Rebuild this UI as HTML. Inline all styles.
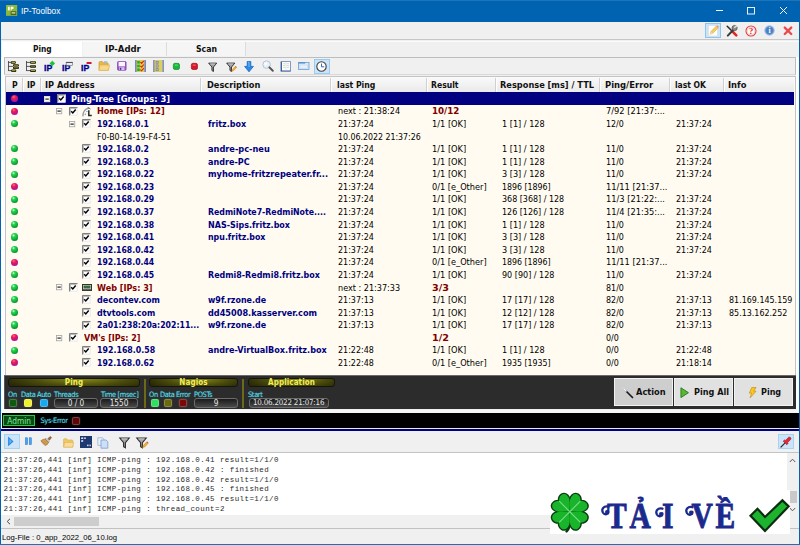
<!DOCTYPE html>
<html><head><meta charset="utf-8"><title>IP-Toolbox</title>
<style>
html,body{margin:0;padding:0}
body{width:800px;height:545px;overflow:hidden;background:#f0f0f0;position:relative;font-family:"DejaVu Sans Condensed","DejaVu Sans",sans-serif;font-size:8.6px;color:#000}
.abs,.t,.h,.hs,.dot,.sel,.ll,div,span,i,svg{position:absolute}
.title{left:0;top:0;width:800px;height:21.6px;background:#0063b1;border-top:1px solid #1c74ba;box-sizing:border-box}
.title .cap{left:21px;top:4.7px;color:#fff;font-family:"Liberation Sans",sans-serif;font-size:9.2px;line-height:11px;white-space:nowrap;transform-origin:0 0;transform:scaleX(.905)}
.wb{left:0;top:21px;width:1px;height:524px;background:#0063b1}
.tb1{left:1px;top:21.6px;width:798px;height:17.7px;background:#f0f0f0;border-bottom:1px solid #c6c6c6}
.tabbar{left:1px;top:40.5px;width:798px;height:17px;background:#f0f0f0;border-top:1px solid #fafafa;box-sizing:border-box}.white{left:1px;top:57px;width:4px;height:372px;background:#fff}
.tab{top:42.2px;height:14px;background:#f5f5f5;border-right:1px solid #dcdcdc;text-align:center;font-weight:bold;font-size:8.6px;line-height:13px;font-family:"DejaVu Sans",sans-serif;color:#000}
.tab.on{background:#fff;top:42.2px;height:15.3px;line-height:13px;border-right:none}
.page{left:4px;top:57px;width:791.5px;height:18px;background:#f0f0f0;border:1px solid #bdbdbd;border-bottom-color:#d8d8d8;box-sizing:border-box}
.tb2{display:none}
.grid{left:4.5px;top:76px;width:791px;height:299px;background:#fffbf0;border:1px solid #c4c4c4;border-bottom:none;box-sizing:border-box}
.ghead{left:5.5px;top:77px;width:788.5px;height:15.5px;background:linear-gradient(#fafafa,#f0f0f0 60%,#eaeaea);border-bottom:1px solid #d5d5d5;box-sizing:border-box}
.h{transform-origin:0 0;font-weight:bold;font-size:8.1px;white-space:nowrap;line-height:10px;color:#111}
.hs{top:77.5px;width:1px;height:14px;background:#d0d0d0;border-right:1px solid #fdfdfd}
.t{transform-origin:0 0;white-space:pre;line-height:12.5px;height:12.5px;font-size:8.1px}
svg{overflow:visible}
.b{font-weight:bold}
.n{color:#000080}
.r{color:#800000}
.w{color:#fff}
.sel{left:5.5px;width:788.5px;height:12.6px;background:#000080}
.dot{left:10.9px;width:7.2px;height:7.2px;border-radius:50%}
.dg{background:radial-gradient(circle at 36% 30%,#e8ffe8 0,#28d850 22%,#12b83a 50%,#0a7c2c 85%,#0a6a4a 100%)}
.dm{background:radial-gradient(circle at 40% 28%,#ff6a8a 0,#e81a50 30%,#c0148a 62%,#8414c4 100%)}
.dark{left:4px;top:374.7px;width:791.5px;height:34.8px;background:#2c2c2c;border-top:1.5px solid #6a6a6a;border-left:1px solid #555;box-sizing:border-box}
.black{left:1.5px;top:413px;width:797.5px;height:14.5px;background:#000}.wl{left:1px;top:409.5px;width:798px;height:3.5px;background:#f6f6f6}.wl2{left:1px;top:427.5px;width:798px;height:1.6px;background:#e8e8f0}
.split{left:1px;top:429.1px;width:798px;height:2.1px;background:#000084}
.gh{top:377.6px;height:9.6px;border-radius:3px;background:radial-gradient(ellipse 60% 160% at 55% 0%,#8a8a18,#4a4a0c 60%,#2a2a08 100%);border:1px solid #15150a;box-sizing:border-box;color:#f2ee58;font-weight:bold;text-align:center;line-height:8px;font-size:8px;letter-spacing:.1px}
.cl{top:389.6px;color:#4adcea;font-size:7.4px;line-height:9px;white-space:nowrap;letter-spacing:-0.35px;text-shadow:0 0 1px rgba(120,240,255,.5)}
.led{top:398.8px;width:8.4px;height:8.4px;border-radius:2px;box-sizing:border-box;border:1px solid rgba(255,255,255,.22);box-shadow:0 0 1.5px .5px rgba(255,255,255,.10)}
.vb{top:398px;height:10px;border-radius:3px;background:linear-gradient(#1a1a1a,#4a4a4a);border:1px solid #6c6c6c;box-sizing:border-box;color:#e8e8e8;text-align:center;font-size:8.2px;line-height:8.5px}
.vsep{top:379px;width:2px;height:29px;background:#6a6a18}
.btn{top:378px;height:27.9px;background:#e1e1e1;border:1px solid #f2f2f2;box-sizing:border-box;font-weight:bold;font-size:8.6px;line-height:27.6px;white-space:nowrap;color:#111}
.tb3{left:1px;top:431.2px;width:798px;height:22.1px;background:#f0f0f0;border-bottom:1px solid #c4c4c4;box-sizing:border-box}
.log{left:1px;top:453.3px;width:786px;height:62.1px;background:#fff}
.ll{left:3.6px;font-family:"Liberation Mono",monospace;font-size:7.5px;letter-spacing:.416px;line-height:9.76px;height:9.76px;white-space:pre;color:#2a2a2a}
.vs{left:787px;top:452.5px;width:12px;height:62.5px;background:#f0f0f0}
.hsb{left:1px;top:515.4px;width:798px;height:12.1px;background:#f0f0f0}
.status{left:1px;top:527.5px;width:798px;height:16px;background:#f0f0f0;border-top:1px solid #c2c2c2;box-sizing:border-box}.bb{left:0;top:543.6px;width:800px;height:1.4px;background:#1a72ba}
.status span{left:1.2px;top:4.6px;transform:scaleX(.975);font-family:"Liberation Sans",sans-serif;font-size:7.9px;line-height:10px;white-space:nowrap;color:#000;transform-origin:0 0}
.wm{left:550px;top:489.6px;width:240.2px;height:44.2px;background:#fff}.wmt{left:604px;top:491.8px;font-family:"Liberation Serif","DejaVu Serif",serif;font-weight:bold;font-size:36px;line-height:40px;color:#1b2a8c;white-space:pre;letter-spacing:4.3px;transform-origin:0 0;transform:scaleX(.88)}
</style></head><body>
<div class="title">
 <svg style="left:6.2px;top:4.1px" width="11.2" height="10.8" viewBox="0 0 12 12" preserveAspectRatio="none"><rect width="12" height="12" fill="#8cb83a"/><rect x="2" y="2" width="2" height="4" fill="#fff"/><path d="M5 2h3v2.5H6V6H5z" fill="#fff"/><rect x="5" y="7" width="6" height="4" fill="#4a5a20"/><rect x="6" y="8" width="4" height="1.5" fill="#d8e8a0"/></svg>
 <span class="cap">IP-Toolbox</span>
 <svg style="left:715px;top:4.2px" width="80" height="12" viewBox="0 0 80 12"><path d="M1 5.5H8" stroke="#fff" stroke-width="1"/><rect x="32.5" y="2.5" width="7" height="6.5" fill="none" stroke="#fff" stroke-width=".9"/><path d="M65 2L72 9M72 2L65 9" stroke="#fff" stroke-width="1"/></svg>
</div>
<div class="wb"></div><div class="wb" style="left:798.5px;width:1.5px"></div>
<div class="tb1"></div>
<div class="tabbar"></div>
<div class="tab on" style="left:1.5px;width:80px"></div>
<div class="tab" style="left:82.5px;width:83px"></div>
<div class="tab" style="left:166.5px;width:78.5px"></div>
<span class="h" style="left:32.6px;top:44.3px;transform:scaleX(1.026)">Ping</span>
<span class="h" style="left:104.6px;top:44.3px;transform:scaleX(1.171)">IP-Addr</span>
<span class="h" style="left:196px;top:44.3px;transform:scaleX(1.068)">Scan</span>
<div class="white"></div><div class="white" style="left:795.5px;width:3px"></div>
<div class="page"></div>
<div class="tb2"></div>
<div class="grid"></div>
<div class="ghead"></div>
<span class="h" style="left:11.6px;top:80.4px;transform:scaleX(1.062)">P</span>
<i class="hs" style="left:21.5px"></i>
<span class="h" style="left:26.8px;top:80.4px;transform:scaleX(1.062)">IP</span>
<i class="hs" style="left:39.5px"></i>
<span class="h" style="left:45px;top:80.4px;transform:scaleX(1.131)">IP Address</span>
<i class="hs" style="left:200px"></i>
<span class="h" style="left:207px;top:80.4px;transform:scaleX(1.131)">Description</span>
<i class="hs" style="left:330px"></i>
<span class="h" style="left:336.8px;top:80.4px;transform:scaleX(1.064)">last Ping</span>
<i class="hs" style="left:425.5px"></i>
<span class="h" style="left:430.8px;top:80.4px;transform:scaleX(1.056)">Result</span>
<i class="hs" style="left:494.5px"></i>
<span class="h" style="left:500px;top:80.4px;transform:scaleX(1.131)">Response [ms] / TTL</span>
<i class="hs" style="left:598.5px"></i>
<span class="h" style="left:604.7px;top:80.4px;transform:scaleX(1.159)">Ping/Error</span>
<i class="hs" style="left:668.5px"></i>
<span class="h" style="left:674.5px;top:80.4px;transform:scaleX(1.048)">last OK</span>
<i class="hs" style="left:722.5px"></i>
<span class="h" style="left:727.8px;top:80.4px;transform:scaleX(1.146)">Info</span>
<div class="sel" style="top:92.4px"></div>
<i class="dot dm" style="top:95.0px"></i>
<svg style="left:44px;top:95.6px" width="6.2" height="6.2" viewBox="0 0 7 7"><rect x="0.5" y="0.5" width="6" height="6" fill="#fbfbf0" stroke="#e8e8d8"/><path d="M1.6 3.5H5.4" stroke="#111" stroke-width="1.25"/></svg>
<svg style="left:57px;top:94.1px" width="8.6" height="8.6" viewBox="0 0 9 9"><rect x="0" y="0" width="9" height="9" fill="#fff"/><path d="M.5 9V.5H9" fill="none" stroke="#7a7a7a" stroke-width="1"/><path d="M1.5 8V1.5H8" fill="none" stroke="#4a4a4a" stroke-width=".8" opacity=".55"/><path d="M8.6 .8V8.6H.8" fill="none" stroke="#e4e4e4" stroke-width=".8"/><path d="M2.3 4.4 L4 6.3 L7 2.6" fill="none" stroke="#000" stroke-width="1.5"/></svg>
<span class="t b w" style="left:71px;top:92.8px;transform:scaleX(1.143)">Ping-Tree [Groups: 3]</span>
<i class="dot dm" style="top:107.6px"></i>
<svg style="left:56.3px;top:108.2px" width="6.2" height="6.2" viewBox="0 0 7 7"><rect x="0.5" y="0.5" width="6" height="6" fill="#fffefa" stroke="#a8a8a8"/><path d="M1.6 3.5H5.4" stroke="#111" stroke-width="1.25"/></svg>
<svg style="left:69px;top:106.7px" width="8.6" height="8.6" viewBox="0 0 9 9"><rect x="0" y="0" width="9" height="9" fill="#fff"/><path d="M.5 9V.5H9" fill="none" stroke="#7a7a7a" stroke-width="1"/><path d="M1.5 8V1.5H8" fill="none" stroke="#4a4a4a" stroke-width=".8" opacity=".55"/><path d="M8.6 .8V8.6H.8" fill="none" stroke="#e4e4e4" stroke-width=".8"/><path d="M2.3 4.4 L4 6.3 L7 2.6" fill="none" stroke="#000" stroke-width="1.5"/></svg>
<svg style="left:82px;top:106.8px" width="11" height="10" viewBox="0 0 11 10"><path d="M.8 9.4 C1 4.6 3.6 1.6 7.4 1.2" fill="none" stroke="#9a9a9a" stroke-width="1.3"/><path d="M5.6 .4 L8.6 2" stroke="#555" stroke-width=".8"/><path d="M3 8 L3.6 6.6 M4.6 5 L5.4 4" stroke="#3a8af0" stroke-width="1"/><path d="M6.8 3.2 V8.6 H9.8" stroke="#2a2a2a" stroke-width="1.5" fill="none"/></svg>
<span class="t b r" style="left:96.7px;top:105.4px;transform:scaleX(1.116)">Home [IPs: 12]</span>
<span class="t" style="left:338.3px;top:105.4px;transform:scaleX(1.111)">next : 21:38:24</span>
<span class="t b r" style="left:432.3px;top:105.4px;transform:scaleX(1.195)">10/12</span>
<span class="t" style="left:606.3px;top:105.4px;transform:scaleX(1.137)">7/92 [21:37:...</span>
<i class="dot dg" style="top:120.2px"></i>
<svg style="left:69.1px;top:120.8px" width="6.2" height="6.2" viewBox="0 0 7 7"><rect x="0.5" y="0.5" width="6" height="6" fill="#fffefa" stroke="#a8a8a8"/><path d="M1.6 3.5H5.4" stroke="#111" stroke-width="1.25"/></svg>
<svg style="left:81.8px;top:119.3px" width="8.6" height="8.6" viewBox="0 0 9 9"><rect x="0" y="0" width="9" height="9" fill="#fff"/><path d="M.5 9V.5H9" fill="none" stroke="#7a7a7a" stroke-width="1"/><path d="M1.5 8V1.5H8" fill="none" stroke="#4a4a4a" stroke-width=".8" opacity=".55"/><path d="M8.6 .8V8.6H.8" fill="none" stroke="#e4e4e4" stroke-width=".8"/><path d="M2.3 4.4 L4 6.3 L7 2.6" fill="none" stroke="#000" stroke-width="1.5"/></svg>
<span class="t b n" style="left:97.1px;top:118.0px;transform:scaleX(1.061)">192.168.0.1</span>
<span class="t b n" style="left:208.2px;top:118.0px;transform:scaleX(1.099)">fritz.box</span>
<span class="t" style="left:338.3px;top:118.0px;transform:scaleX(1.095)">21:37:24</span>
<span class="t" style="left:432.3px;top:118.0px;transform:scaleX(1.132)">1/1 [OK]</span>
<span class="t" style="left:501.5px;top:118.0px;transform:scaleX(1.117)">1 [1] / 128</span>
<span class="t" style="left:606.3px;top:118.0px;transform:scaleX(1.088)">12/0</span>
<span class="t" style="left:676.1px;top:118.0px;transform:scaleX(1.095)">21:37:24</span>
<span class="t" style="left:97.1px;top:130.5px;transform:scaleX(1.089)">F0-B0-14-19-F4-51</span>
<span class="t" style="left:338.3px;top:130.5px;transform:scaleX(1.079)">10.06.2022 21:37:26</span>
<i class="dot dg" style="top:145.3px"></i>
<svg style="left:81.8px;top:144.4px" width="8.6" height="8.6" viewBox="0 0 9 9"><rect x="0" y="0" width="9" height="9" fill="#fff"/><path d="M.5 9V.5H9" fill="none" stroke="#7a7a7a" stroke-width="1"/><path d="M1.5 8V1.5H8" fill="none" stroke="#4a4a4a" stroke-width=".8" opacity=".55"/><path d="M8.6 .8V8.6H.8" fill="none" stroke="#e4e4e4" stroke-width=".8"/><path d="M2.3 4.4 L4 6.3 L7 2.6" fill="none" stroke="#000" stroke-width="1.5"/></svg>
<span class="t b n" style="left:97.1px;top:143.1px;transform:scaleX(1.062)">192.168.0.2</span>
<span class="t b n" style="left:208.2px;top:143.1px;transform:scaleX(1.129)">andre-pc-neu</span>
<span class="t" style="left:338.3px;top:143.1px;transform:scaleX(1.095)">21:37:24</span>
<span class="t" style="left:432.3px;top:143.1px;transform:scaleX(1.132)">1/1 [OK]</span>
<span class="t" style="left:501.5px;top:143.1px;transform:scaleX(1.117)">1 [1] / 128</span>
<span class="t" style="left:606.3px;top:143.1px;transform:scaleX(1.094)">11/0</span>
<span class="t" style="left:676.1px;top:143.1px;transform:scaleX(1.095)">21:37:24</span>
<i class="dot dg" style="top:157.9px"></i>
<svg style="left:81.8px;top:157.0px" width="8.6" height="8.6" viewBox="0 0 9 9"><rect x="0" y="0" width="9" height="9" fill="#fff"/><path d="M.5 9V.5H9" fill="none" stroke="#7a7a7a" stroke-width="1"/><path d="M1.5 8V1.5H8" fill="none" stroke="#4a4a4a" stroke-width=".8" opacity=".55"/><path d="M8.6 .8V8.6H.8" fill="none" stroke="#e4e4e4" stroke-width=".8"/><path d="M2.3 4.4 L4 6.3 L7 2.6" fill="none" stroke="#000" stroke-width="1.5"/></svg>
<span class="t b n" style="left:97.1px;top:155.7px;transform:scaleX(1.062)">192.168.0.3</span>
<span class="t b n" style="left:208.2px;top:155.7px;transform:scaleX(1.108)">andre-PC</span>
<span class="t" style="left:338.3px;top:155.7px;transform:scaleX(1.095)">21:37:24</span>
<span class="t" style="left:432.3px;top:155.7px;transform:scaleX(1.132)">1/1 [OK]</span>
<span class="t" style="left:501.5px;top:155.7px;transform:scaleX(1.117)">1 [1] / 128</span>
<span class="t" style="left:606.3px;top:155.7px;transform:scaleX(1.094)">11/0</span>
<span class="t" style="left:676.1px;top:155.7px;transform:scaleX(1.095)">21:37:24</span>
<i class="dot dg" style="top:170.5px"></i>
<svg style="left:81.8px;top:169.6px" width="8.6" height="8.6" viewBox="0 0 9 9"><rect x="0" y="0" width="9" height="9" fill="#fff"/><path d="M.5 9V.5H9" fill="none" stroke="#7a7a7a" stroke-width="1"/><path d="M1.5 8V1.5H8" fill="none" stroke="#4a4a4a" stroke-width=".8" opacity=".55"/><path d="M8.6 .8V8.6H.8" fill="none" stroke="#e4e4e4" stroke-width=".8"/><path d="M2.3 4.4 L4 6.3 L7 2.6" fill="none" stroke="#000" stroke-width="1.5"/></svg>
<span class="t b n" style="left:97.1px;top:168.3px;transform:scaleX(1.062)">192.168.0.22</span>
<span class="t b n" style="left:208.2px;top:168.3px;transform:scaleX(1.131)">myhome-fritzrepeater.fr...</span>
<span class="t" style="left:338.3px;top:168.3px;transform:scaleX(1.095)">21:37:24</span>
<span class="t" style="left:432.3px;top:168.3px;transform:scaleX(1.132)">1/1 [OK]</span>
<span class="t" style="left:501.5px;top:168.3px;transform:scaleX(1.117)">3 [3] / 128</span>
<span class="t" style="left:606.3px;top:168.3px;transform:scaleX(1.094)">11/0</span>
<span class="t" style="left:676.1px;top:168.3px;transform:scaleX(1.095)">21:37:24</span>
<i class="dot dm" style="top:183.1px"></i>
<svg style="left:81.8px;top:182.2px" width="8.6" height="8.6" viewBox="0 0 9 9"><rect x="0" y="0" width="9" height="9" fill="#fff"/><path d="M.5 9V.5H9" fill="none" stroke="#7a7a7a" stroke-width="1"/><path d="M1.5 8V1.5H8" fill="none" stroke="#4a4a4a" stroke-width=".8" opacity=".55"/><path d="M8.6 .8V8.6H.8" fill="none" stroke="#e4e4e4" stroke-width=".8"/><path d="M2.3 4.4 L4 6.3 L7 2.6" fill="none" stroke="#000" stroke-width="1.5"/></svg>
<span class="t b n" style="left:97.1px;top:180.9px;transform:scaleX(1.062)">192.168.0.23</span>
<span class="t" style="left:338.3px;top:180.9px;transform:scaleX(1.095)">21:37:24</span>
<span class="t" style="left:432.3px;top:180.9px;transform:scaleX(1.127)">0/1 [e_Other]</span>
<span class="t" style="left:501.5px;top:180.9px;transform:scaleX(1.079)">1896 [1896]</span>
<span class="t" style="left:606.3px;top:180.9px;transform:scaleX(1.136)">11/11 [21:37...</span>
<i class="dot dg" style="top:195.6px"></i>
<svg style="left:81.8px;top:194.7px" width="8.6" height="8.6" viewBox="0 0 9 9"><rect x="0" y="0" width="9" height="9" fill="#fff"/><path d="M.5 9V.5H9" fill="none" stroke="#7a7a7a" stroke-width="1"/><path d="M1.5 8V1.5H8" fill="none" stroke="#4a4a4a" stroke-width=".8" opacity=".55"/><path d="M8.6 .8V8.6H.8" fill="none" stroke="#e4e4e4" stroke-width=".8"/><path d="M2.3 4.4 L4 6.3 L7 2.6" fill="none" stroke="#000" stroke-width="1.5"/></svg>
<span class="t b n" style="left:97.1px;top:193.4px;transform:scaleX(1.062)">192.168.0.29</span>
<span class="t" style="left:338.3px;top:193.4px;transform:scaleX(1.095)">21:37:24</span>
<span class="t" style="left:432.3px;top:193.4px;transform:scaleX(1.132)">1/1 [OK]</span>
<span class="t" style="left:501.5px;top:193.4px;transform:scaleX(1.094)">368 [368] / 128</span>
<span class="t" style="left:606.3px;top:193.4px;transform:scaleX(1.136)">11/3 [21:22:...</span>
<span class="t" style="left:676.1px;top:193.4px;transform:scaleX(1.095)">21:37:24</span>
<i class="dot dg" style="top:208.2px"></i>
<svg style="left:81.8px;top:207.3px" width="8.6" height="8.6" viewBox="0 0 9 9"><rect x="0" y="0" width="9" height="9" fill="#fff"/><path d="M.5 9V.5H9" fill="none" stroke="#7a7a7a" stroke-width="1"/><path d="M1.5 8V1.5H8" fill="none" stroke="#4a4a4a" stroke-width=".8" opacity=".55"/><path d="M8.6 .8V8.6H.8" fill="none" stroke="#e4e4e4" stroke-width=".8"/><path d="M2.3 4.4 L4 6.3 L7 2.6" fill="none" stroke="#000" stroke-width="1.5"/></svg>
<span class="t b n" style="left:97.1px;top:206.0px;transform:scaleX(1.062)">192.168.0.37</span>
<span class="t b n" style="left:208.2px;top:206.0px;transform:scaleX(1.073)">RedmiNote7-RedmiNote....</span>
<span class="t" style="left:338.3px;top:206.0px;transform:scaleX(1.095)">21:37:24</span>
<span class="t" style="left:432.3px;top:206.0px;transform:scaleX(1.132)">1/1 [OK]</span>
<span class="t" style="left:501.5px;top:206.0px;transform:scaleX(1.094)">126 [126] / 128</span>
<span class="t" style="left:606.3px;top:206.0px;transform:scaleX(1.136)">11/4 [21:35:...</span>
<span class="t" style="left:676.1px;top:206.0px;transform:scaleX(1.095)">21:37:24</span>
<i class="dot dg" style="top:220.8px"></i>
<svg style="left:81.8px;top:219.9px" width="8.6" height="8.6" viewBox="0 0 9 9"><rect x="0" y="0" width="9" height="9" fill="#fff"/><path d="M.5 9V.5H9" fill="none" stroke="#7a7a7a" stroke-width="1"/><path d="M1.5 8V1.5H8" fill="none" stroke="#4a4a4a" stroke-width=".8" opacity=".55"/><path d="M8.6 .8V8.6H.8" fill="none" stroke="#e4e4e4" stroke-width=".8"/><path d="M2.3 4.4 L4 6.3 L7 2.6" fill="none" stroke="#000" stroke-width="1.5"/></svg>
<span class="t b n" style="left:97.1px;top:218.6px;transform:scaleX(1.062)">192.168.0.38</span>
<span class="t b n" style="left:208.2px;top:218.6px;transform:scaleX(1.098)">NAS-Sips.fritz.box</span>
<span class="t" style="left:338.3px;top:218.6px;transform:scaleX(1.095)">21:37:24</span>
<span class="t" style="left:432.3px;top:218.6px;transform:scaleX(1.132)">1/1 [OK]</span>
<span class="t" style="left:501.5px;top:218.6px;transform:scaleX(1.117)">1 [1] / 128</span>
<span class="t" style="left:606.3px;top:218.6px;transform:scaleX(1.094)">11/0</span>
<span class="t" style="left:676.1px;top:218.6px;transform:scaleX(1.095)">21:37:24</span>
<i class="dot dg" style="top:233.4px"></i>
<svg style="left:81.8px;top:232.5px" width="8.6" height="8.6" viewBox="0 0 9 9"><rect x="0" y="0" width="9" height="9" fill="#fff"/><path d="M.5 9V.5H9" fill="none" stroke="#7a7a7a" stroke-width="1"/><path d="M1.5 8V1.5H8" fill="none" stroke="#4a4a4a" stroke-width=".8" opacity=".55"/><path d="M8.6 .8V8.6H.8" fill="none" stroke="#e4e4e4" stroke-width=".8"/><path d="M2.3 4.4 L4 6.3 L7 2.6" fill="none" stroke="#000" stroke-width="1.5"/></svg>
<span class="t b n" style="left:97.1px;top:231.2px;transform:scaleX(1.062)">192.168.0.41</span>
<span class="t b n" style="left:208.2px;top:231.2px;transform:scaleX(1.083)">npu.fritz.box</span>
<span class="t" style="left:338.3px;top:231.2px;transform:scaleX(1.095)">21:37:24</span>
<span class="t" style="left:432.3px;top:231.2px;transform:scaleX(1.132)">1/1 [OK]</span>
<span class="t" style="left:501.5px;top:231.2px;transform:scaleX(1.117)">3 [3] / 128</span>
<span class="t" style="left:606.3px;top:231.2px;transform:scaleX(1.094)">11/0</span>
<span class="t" style="left:676.1px;top:231.2px;transform:scaleX(1.095)">21:37:24</span>
<i class="dot dg" style="top:246.0px"></i>
<svg style="left:81.8px;top:245.1px" width="8.6" height="8.6" viewBox="0 0 9 9"><rect x="0" y="0" width="9" height="9" fill="#fff"/><path d="M.5 9V.5H9" fill="none" stroke="#7a7a7a" stroke-width="1"/><path d="M1.5 8V1.5H8" fill="none" stroke="#4a4a4a" stroke-width=".8" opacity=".55"/><path d="M8.6 .8V8.6H.8" fill="none" stroke="#e4e4e4" stroke-width=".8"/><path d="M2.3 4.4 L4 6.3 L7 2.6" fill="none" stroke="#000" stroke-width="1.5"/></svg>
<span class="t b n" style="left:97.1px;top:243.8px;transform:scaleX(1.062)">192.168.0.42</span>
<span class="t" style="left:338.3px;top:243.8px;transform:scaleX(1.095)">21:37:24</span>
<span class="t" style="left:432.3px;top:243.8px;transform:scaleX(1.132)">1/1 [OK]</span>
<span class="t" style="left:501.5px;top:243.8px;transform:scaleX(1.117)">3 [3] / 128</span>
<span class="t" style="left:606.3px;top:243.8px;transform:scaleX(1.094)">11/0</span>
<span class="t" style="left:676.1px;top:243.8px;transform:scaleX(1.095)">21:37:24</span>
<i class="dot dm" style="top:258.5px"></i>
<svg style="left:81.8px;top:257.6px" width="8.6" height="8.6" viewBox="0 0 9 9"><rect x="0" y="0" width="9" height="9" fill="#fff"/><path d="M.5 9V.5H9" fill="none" stroke="#7a7a7a" stroke-width="1"/><path d="M1.5 8V1.5H8" fill="none" stroke="#4a4a4a" stroke-width=".8" opacity=".55"/><path d="M8.6 .8V8.6H.8" fill="none" stroke="#e4e4e4" stroke-width=".8"/><path d="M2.3 4.4 L4 6.3 L7 2.6" fill="none" stroke="#000" stroke-width="1.5"/></svg>
<span class="t b n" style="left:97.1px;top:256.3px;transform:scaleX(1.062)">192.168.0.44</span>
<span class="t" style="left:338.3px;top:256.3px;transform:scaleX(1.095)">21:37:24</span>
<span class="t" style="left:432.3px;top:256.3px;transform:scaleX(1.127)">0/1 [e_Other]</span>
<span class="t" style="left:501.5px;top:256.3px;transform:scaleX(1.079)">1896 [1896]</span>
<span class="t" style="left:606.3px;top:256.3px;transform:scaleX(1.136)">11/11 [21:37...</span>
<i class="dot dg" style="top:271.1px"></i>
<svg style="left:81.8px;top:270.2px" width="8.6" height="8.6" viewBox="0 0 9 9"><rect x="0" y="0" width="9" height="9" fill="#fff"/><path d="M.5 9V.5H9" fill="none" stroke="#7a7a7a" stroke-width="1"/><path d="M1.5 8V1.5H8" fill="none" stroke="#4a4a4a" stroke-width=".8" opacity=".55"/><path d="M8.6 .8V8.6H.8" fill="none" stroke="#e4e4e4" stroke-width=".8"/><path d="M2.3 4.4 L4 6.3 L7 2.6" fill="none" stroke="#000" stroke-width="1.5"/></svg>
<span class="t b n" style="left:97.1px;top:268.9px;transform:scaleX(1.062)">192.168.0.45</span>
<span class="t b n" style="left:208.2px;top:268.9px;transform:scaleX(1.094)">Redmi8-Redmi8.fritz.box</span>
<span class="t" style="left:338.3px;top:268.9px;transform:scaleX(1.095)">21:37:24</span>
<span class="t" style="left:432.3px;top:268.9px;transform:scaleX(1.132)">1/1 [OK]</span>
<span class="t" style="left:501.5px;top:268.9px;transform:scaleX(1.104)">90 [90] / 128</span>
<span class="t" style="left:606.3px;top:268.9px;transform:scaleX(1.094)">11/0</span>
<span class="t" style="left:676.1px;top:268.9px;transform:scaleX(1.095)">21:37:24</span>
<i class="dot dg" style="top:283.7px"></i>
<svg style="left:56.3px;top:284.3px" width="6.2" height="6.2" viewBox="0 0 7 7"><rect x="0.5" y="0.5" width="6" height="6" fill="#fffefa" stroke="#a8a8a8"/><path d="M1.6 3.5H5.4" stroke="#111" stroke-width="1.25"/></svg>
<svg style="left:69px;top:282.8px" width="8.6" height="8.6" viewBox="0 0 9 9"><rect x="0" y="0" width="9" height="9" fill="#fff"/><path d="M.5 9V.5H9" fill="none" stroke="#7a7a7a" stroke-width="1"/><path d="M1.5 8V1.5H8" fill="none" stroke="#4a4a4a" stroke-width=".8" opacity=".55"/><path d="M8.6 .8V8.6H.8" fill="none" stroke="#e4e4e4" stroke-width=".8"/><path d="M2.3 4.4 L4 6.3 L7 2.6" fill="none" stroke="#000" stroke-width="1.5"/></svg>
<svg style="left:81.5px;top:283.8px" width="10" height="7" viewBox="0 0 10 7"><rect x="0.5" y="0.5" width="9" height="6" fill="#dfe6df" stroke="#333"/><rect x="1.5" y="1.5" width="7" height="3" fill="#3a6a3a"/><path d="M1 5.6H9" stroke="#555" stroke-width="1"/></svg>
<span class="t b r" style="left:96.7px;top:281.5px;transform:scaleX(1.115)">Web [IPs: 3]</span>
<span class="t" style="left:338.3px;top:281.5px;transform:scaleX(1.111)">next : 21:37:33</span>
<span class="t b r" style="left:432.3px;top:281.5px;transform:scaleX(1.328)">3/3</span>
<span class="t" style="left:606.3px;top:281.5px;transform:scaleX(1.094)">81/0</span>
<i class="dot dg" style="top:296.3px"></i>
<svg style="left:81.8px;top:295.4px" width="8.6" height="8.6" viewBox="0 0 9 9"><rect x="0" y="0" width="9" height="9" fill="#fff"/><path d="M.5 9V.5H9" fill="none" stroke="#7a7a7a" stroke-width="1"/><path d="M1.5 8V1.5H8" fill="none" stroke="#4a4a4a" stroke-width=".8" opacity=".55"/><path d="M8.6 .8V8.6H.8" fill="none" stroke="#e4e4e4" stroke-width=".8"/><path d="M2.3 4.4 L4 6.3 L7 2.6" fill="none" stroke="#000" stroke-width="1.5"/></svg>
<span class="t b n" style="left:97.1px;top:294.1px;transform:scaleX(1.107)">decontev.com</span>
<span class="t b n" style="left:208.2px;top:294.1px;transform:scaleX(1.093)">w9f.rzone.de</span>
<span class="t" style="left:338.3px;top:294.1px;transform:scaleX(1.094)">21:37:13</span>
<span class="t" style="left:432.3px;top:294.1px;transform:scaleX(1.132)">1/1 [OK]</span>
<span class="t" style="left:501.5px;top:294.1px;transform:scaleX(1.104)">17 [17] / 128</span>
<span class="t" style="left:606.3px;top:294.1px;transform:scaleX(1.094)">82/0</span>
<span class="t" style="left:676.1px;top:294.1px;transform:scaleX(1.094)">21:37:13</span>
<span class="t" style="left:729px;top:294.1px;transform:scaleX(1.094)">81.169.145.159</span>
<i class="dot dg" style="top:308.9px"></i>
<svg style="left:81.8px;top:308.0px" width="8.6" height="8.6" viewBox="0 0 9 9"><rect x="0" y="0" width="9" height="9" fill="#fff"/><path d="M.5 9V.5H9" fill="none" stroke="#7a7a7a" stroke-width="1"/><path d="M1.5 8V1.5H8" fill="none" stroke="#4a4a4a" stroke-width=".8" opacity=".55"/><path d="M8.6 .8V8.6H.8" fill="none" stroke="#e4e4e4" stroke-width=".8"/><path d="M2.3 4.4 L4 6.3 L7 2.6" fill="none" stroke="#000" stroke-width="1.5"/></svg>
<span class="t b n" style="left:97.1px;top:306.7px;transform:scaleX(1.089)">dtvtools.com</span>
<span class="t b n" style="left:208.2px;top:306.7px;transform:scaleX(1.121)">dd45008.kasserver.com</span>
<span class="t" style="left:338.3px;top:306.7px;transform:scaleX(1.094)">21:37:13</span>
<span class="t" style="left:432.3px;top:306.7px;transform:scaleX(1.132)">1/1 [OK]</span>
<span class="t" style="left:501.5px;top:306.7px;transform:scaleX(1.104)">12 [12] / 128</span>
<span class="t" style="left:606.3px;top:306.7px;transform:scaleX(1.094)">82/0</span>
<span class="t" style="left:676.1px;top:306.7px;transform:scaleX(1.094)">21:37:13</span>
<span class="t" style="left:729px;top:306.7px;transform:scaleX(1.094)">85.13.162.252</span>
<i class="dot dg" style="top:321.4px"></i>
<svg style="left:81.8px;top:320.5px" width="8.6" height="8.6" viewBox="0 0 9 9"><rect x="0" y="0" width="9" height="9" fill="#fff"/><path d="M.5 9V.5H9" fill="none" stroke="#7a7a7a" stroke-width="1"/><path d="M1.5 8V1.5H8" fill="none" stroke="#4a4a4a" stroke-width=".8" opacity=".55"/><path d="M8.6 .8V8.6H.8" fill="none" stroke="#e4e4e4" stroke-width=".8"/><path d="M2.3 4.4 L4 6.3 L7 2.6" fill="none" stroke="#000" stroke-width="1.5"/></svg>
<span class="t b n" style="left:97.1px;top:319.2px;transform:scaleX(1.069)">2a01:238:20a:202:11...</span>
<span class="t b n" style="left:208.2px;top:319.2px;transform:scaleX(1.093)">w9f.rzone.de</span>
<span class="t" style="left:338.3px;top:319.2px;transform:scaleX(1.094)">21:37:13</span>
<span class="t" style="left:432.3px;top:319.2px;transform:scaleX(1.132)">1/1 [OK]</span>
<span class="t" style="left:501.5px;top:319.2px;transform:scaleX(1.104)">17 [17] / 128</span>
<span class="t" style="left:606.3px;top:319.2px;transform:scaleX(1.094)">82/0</span>
<span class="t" style="left:676.1px;top:319.2px;transform:scaleX(1.094)">21:37:13</span>
<i class="dot dm" style="top:334.0px"></i>
<svg style="left:56.3px;top:334.6px" width="6.2" height="6.2" viewBox="0 0 7 7"><rect x="0.5" y="0.5" width="6" height="6" fill="#fffefa" stroke="#a8a8a8"/><path d="M1.6 3.5H5.4" stroke="#111" stroke-width="1.25"/></svg>
<svg style="left:69px;top:333.1px" width="8.6" height="8.6" viewBox="0 0 9 9"><rect x="0" y="0" width="9" height="9" fill="#fff"/><path d="M.5 9V.5H9" fill="none" stroke="#7a7a7a" stroke-width="1"/><path d="M1.5 8V1.5H8" fill="none" stroke="#4a4a4a" stroke-width=".8" opacity=".55"/><path d="M8.6 .8V8.6H.8" fill="none" stroke="#e4e4e4" stroke-width=".8"/><path d="M2.3 4.4 L4 6.3 L7 2.6" fill="none" stroke="#000" stroke-width="1.5"/></svg>
<span class="t b r" style="left:83.9px;top:331.8px;transform:scaleX(1.099)">VM's [IPs: 2]</span>
<span class="t b r" style="left:432.3px;top:331.8px;transform:scaleX(1.328)">1/2</span>
<span class="t" style="left:606.3px;top:331.8px;transform:scaleX(1.094)">0/0</span>
<i class="dot dg" style="top:346.6px"></i>
<svg style="left:81.8px;top:345.7px" width="8.6" height="8.6" viewBox="0 0 9 9"><rect x="0" y="0" width="9" height="9" fill="#fff"/><path d="M.5 9V.5H9" fill="none" stroke="#7a7a7a" stroke-width="1"/><path d="M1.5 8V1.5H8" fill="none" stroke="#4a4a4a" stroke-width=".8" opacity=".55"/><path d="M8.6 .8V8.6H.8" fill="none" stroke="#e4e4e4" stroke-width=".8"/><path d="M2.3 4.4 L4 6.3 L7 2.6" fill="none" stroke="#000" stroke-width="1.5"/></svg>
<span class="t b n" style="left:97.1px;top:344.4px;transform:scaleX(1.080)">192.168.0.58</span>
<span class="t b n" style="left:208.2px;top:344.4px;transform:scaleX(1.114)">andre-VirtualBox.fritz.box</span>
<span class="t" style="left:338.3px;top:344.4px;transform:scaleX(1.094)">21:22:48</span>
<span class="t" style="left:432.3px;top:344.4px;transform:scaleX(1.132)">1/1 [OK]</span>
<span class="t" style="left:501.5px;top:344.4px;transform:scaleX(1.117)">1 [1] / 128</span>
<span class="t" style="left:606.3px;top:344.4px;transform:scaleX(1.094)">0/0</span>
<span class="t" style="left:676.1px;top:344.4px;transform:scaleX(1.094)">21:22:48</span>
<i class="dot dm" style="top:359.2px"></i>
<svg style="left:81.8px;top:358.3px" width="8.6" height="8.6" viewBox="0 0 9 9"><rect x="0" y="0" width="9" height="9" fill="#fff"/><path d="M.5 9V.5H9" fill="none" stroke="#7a7a7a" stroke-width="1"/><path d="M1.5 8V1.5H8" fill="none" stroke="#4a4a4a" stroke-width=".8" opacity=".55"/><path d="M8.6 .8V8.6H.8" fill="none" stroke="#e4e4e4" stroke-width=".8"/><path d="M2.3 4.4 L4 6.3 L7 2.6" fill="none" stroke="#000" stroke-width="1.5"/></svg>
<span class="t b n" style="left:97.1px;top:357.0px;transform:scaleX(1.062)">192.168.0.62</span>
<span class="t" style="left:338.3px;top:357.0px;transform:scaleX(1.094)">21:22:48</span>
<span class="t" style="left:432.3px;top:357.0px;transform:scaleX(1.127)">0/1 [e_Other]</span>
<span class="t" style="left:501.5px;top:357.0px;transform:scaleX(1.079)">1935 [1935]</span>
<span class="t" style="left:606.3px;top:357.0px;transform:scaleX(1.094)">0/0</span>
<span class="t" style="left:676.1px;top:357.0px;transform:scaleX(1.094)">21:18:14</span>
<div class="dark"></div>
<div class="gh" style="left:8px;width:132px">Ping</div>
<div class="gh" style="left:149px;width:89px">Nagios</div>
<div class="gh" style="left:248px;width:87px">Application</div>
<div class="vsep" style="left:143.6px"></div><div class="vsep" style="left:242px"></div>
<span class="cl" style="left:8px">On</span><span class="cl" style="left:21px">Data</span><span class="cl" style="left:37px">Auto</span><span class="cl" style="left:54px">Threads</span><span class="cl" style="left:101px">Time [msec]</span>
<i class="led" style="left:9px;background:#0d5a12"></i><i class="led" style="left:24px;background:#f0f030"></i><i class="led" style="left:40px;background:#18a8f0"></i>
<div class="vb" style="left:54px;width:44px">0 / 0</div><div class="vb" style="left:100px;width:38px">1550</div>
<span class="cl" style="left:149px">On</span><span class="cl" style="left:160px">Data</span><span class="cl" style="left:176px">Error</span><span class="cl" style="left:194px">POSTs</span>
<i class="led" style="left:151px;background:#30e060"></i><i class="led" style="left:164px;background:#6a6a10"></i><i class="led" style="left:179px;background:#7a0a0a"></i>
<div class="vb" style="left:194px;width:44px">9</div>
<span class="cl" style="left:248px">Start</span>
<div class="vb" style="left:248.6px;width:80px;font-size:7.9px;letter-spacing:-.18px">10.06.2022 21:07:16</div>
<div class="btn" style="left:613.7px;width:59px;background:#cecece"><svg style="left:8px;top:8.6px" width="11" height="11" viewBox="0 0 11 11"><path d="M1.5 1.5 L9.5 9.5" stroke="#1a1a1a" stroke-width="1.7" stroke-linecap="round"/><path d="M1.2 1.2 L3 3" stroke="#f8f8f8" stroke-width="1.7" stroke-linecap="round"/></svg><span style="left:21.8px;top:0;transform-origin:0 0;transform:scaleX(1.07)">Action</span></div>
<div class="btn" style="left:674.4px;width:58.3px"><svg style="left:5px;top:8.4px" width="9.4" height="11.4" viewBox="0 0 10 12"><path d="M1 .8 L9 6 L1 11.2Z" fill="#58b838" stroke="#2a7a18" stroke-width="1"/></svg><span style="left:18.2px;top:0;transform-origin:0 0;transform:scaleX(1.05)">Ping All</span></div>
<div class="btn" style="left:734.4px;width:58.3px"><svg style="left:12.5px;top:8.4px" width="9.4" height="11.4" viewBox="0 0 10 12"><path d="M4 .5 H8.6 L6 4.4 H8.6 L2.2 11.5 L3.8 6.4 H1.4Z" fill="#f8c820" stroke="#c88a10" stroke-width=".7"/></svg><span style="left:25.4px;top:0;transform-origin:0 0;transform:scaleX(1.04)">Ping</span></div>
<div class="wl"></div><div class="black"></div><div class="wl2"></div>
<div style="left:3.4px;top:415px;width:31.6px;height:11px;border:1px solid #22cc44;box-sizing:border-box;background:#0c4a14;color:#7af09a;font-size:8.3px;line-height:10.2px;text-align:center">Admin</div>
<span class="cl" style="left:40.5px;top:416px">Sys-Error</span>
<i class="led" style="left:71.5px;top:416.5px;background:#5a0808"></i>
<div class="split"></div>
<div class="tb3"></div>
<div class="log"></div>
<div class="ll" style="top:456.10px">21:37:26,441 [inf] ICMP-ping : 192.168.0.41 result=1/1/0</div>
<div class="ll" style="top:465.86px">21:37:26,441 [inf] ICMP-ping : 192.168.0.42 : finished</div>
<div class="ll" style="top:475.62px">21:37:26,441 [inf] ICMP-ping : 192.168.0.42 result=1/1/0</div>
<div class="ll" style="top:485.38px">21:37:26,441 [inf] ICMP-ping : 192.168.0.45 : finished</div>
<div class="ll" style="top:495.14px">21:37:26,441 [inf] ICMP-ping : 192.168.0.45 result=1/1/0</div>
<div class="ll" style="top:504.90px">21:37:26,441 [inf] ICMP-ping : thread_count=2</div>
<div class="vs"><svg style="left:2px;top:5px" width="7" height="5" viewBox="0 0 7 5"><path d="M.8 4 L3.5 1.2 L6.2 4" fill="none" stroke="#555" stroke-width="1"/></svg><i style="left:3px;top:38.5px;width:6.8px;height:11.5px;background:#c9c9c9"></i><svg style="left:2px;top:54px" width="7" height="5" viewBox="0 0 7 5"><path d="M.8 1 L3.5 3.8 L6.2 1" fill="none" stroke="#555" stroke-width="1"/></svg></div>
<div class="hsb"><svg style="left:5px;top:2.8px" width="5" height="7" viewBox="0 0 5 7"><path d="M4 .8 L1.2 3.5 L4 6.2" fill="none" stroke="#444" stroke-width="1"/></svg><i style="left:13px;top:1.2px;width:85px;height:9.4px;background:#cdcdcd"></i></div>
<div class="status"><span>Log-File : 0_app_2022_06_10.log</span></div>
<!-- top-right toolbar icons -->
<div style="left:705px;top:23px;width:16px;height:15px;background:#cce4f7;border:1px solid #8fc4ee;box-sizing:border-box"></div>
<svg style="left:707px;top:24px" width="13" height="13" viewBox="0 0 13 13"><rect x="1.5" y="1.5" width="9" height="10.5" fill="#fff" stroke="#d8d8d8" stroke-width=".6"/><path d="M3 10.2 L3.8 7.6 L9.3 2 L11.2 3.8 L5.6 9.4Z" fill="#f6cc62" stroke="#d8a23a" stroke-width=".5"/><path d="M3 10.2 L3.8 7.6 L5.6 9.4Z" fill="#ecdcb8"/><path d="M9.3 2 L10.2 1.2 L12 3 L11.2 3.8Z" fill="#e88a8a"/></svg>
<svg style="left:725.5px;top:24.5px" width="12" height="12" viewBox="0 0 12 12"><path d="M1.2 1.2 L7 7" stroke="#2a2a2a" stroke-width="1.5" stroke-linecap="round"/><path d="M6.5 6.5 L10.3 10.3" stroke="#e02828" stroke-width="2.6" stroke-linecap="round"/><path d="M1.8 10.6 L7.2 5" stroke="#3a3a3a" stroke-width="2" stroke-linecap="round"/><circle cx="8.6" cy="3" r="2.6" fill="#8a8a8a" stroke="#4a4a4a" stroke-width=".7"/><path d="M8.4 2.8 L10.8 0.6" stroke="#f0f0f0" stroke-width="1.4"/><circle cx="9.8" cy="2.2" r=".7" fill="#9c9"/></svg>
<svg style="left:744.5px;top:25px" width="12" height="12" viewBox="0 0 12 12"><circle cx="6" cy="6" r="5" fill="#fff" stroke="#e03a3a" stroke-width="1.1"/><circle cx="6" cy="6" r="3.9" fill="none" stroke="#f6b6b6" stroke-width=".7"/><text x="6" y="9" font-family="Liberation Serif,serif" font-weight="bold" font-size="8.5" fill="#d81818" text-anchor="middle">?</text></svg>
<svg style="left:763.6px;top:25.2px" width="11" height="11" viewBox="0 0 12 12"><circle cx="6" cy="6" r="5.2" fill="#6a9ad4" stroke="#9cbce4" stroke-width=".8"/><circle cx="6" cy="6" r="3.8" fill="#4a80c6"/><text x="6" y="9" font-family="Liberation Serif,serif" font-weight="bold" font-size="8.5" fill="#fff" text-anchor="middle">i</text></svg>
<svg style="left:783.2px;top:26px" width="10" height="9.6" viewBox="0 0 11 11"><path d="M1.8 1.8 L9.2 9.2 M9.2 1.8 L1.8 9.2" stroke="#ea4a4e" stroke-width="2.7" stroke-linecap="round"/></svg>

<!-- main toolbar icons y=60 -->
<svg style="left:8px;top:61px" width="12" height="12" viewBox="0 0 12 12"><path d="M.5 0 V10 M.5 1.4 H3 M.5 5.4 H5 M.5 9.6 H3.4" stroke="#333" stroke-width=".8" fill="none"/><rect x="2.8" y=".2" width="5" height="2.5" rx=".8" fill="#1c1c08"/><path d="M3.6 1.4H7" stroke="#c8c040" stroke-width=".9"/><rect x="5" y="3.3" width="5.9" height="2.3" rx=".8" fill="#1c1c08"/><path d="M5.8 4.4H10" stroke="#a8a030" stroke-width=".8"/><rect x="5" y="5.7" width="5.9" height="2.3" rx=".8" fill="#1c1c08"/><path d="M5.8 6.8H10" stroke="#a8a030" stroke-width=".8"/><rect x="3.2" y="8.5" width="5" height="2.5" rx=".8" fill="#1c1c08"/><path d="M4 9.7H7.4" stroke="#c8c040" stroke-width=".9"/></svg>
<svg style="left:26.3px;top:61px" width="12" height="12" viewBox="0 0 12 12"><path d="M.5 0 V10 M.5 1.4 H4 M.5 5.4 H4 M.5 9.6 H4" stroke="#333" stroke-width=".8" fill="none"/><rect x="4" y=".2" width="6" height="2.5" rx=".8" fill="#1c1c08"/><path d="M4.8 1.4H9.2" stroke="#c8c040" stroke-width=".9"/><rect x="4" y="4.2" width="6" height="2.5" rx=".8" fill="#1c1c08"/><path d="M4.8 5.4H9.2" stroke="#8a8428" stroke-width=".8"/><rect x="4" y="8.4" width="6" height="2.5" rx=".8" fill="#1c1c08"/><path d="M4.8 9.6H9.2" stroke="#c8c040" stroke-width=".9"/></svg>
<svg style="left:44.3px;top:60px" width="13" height="13" viewBox="0 0 13 13"><text x="0" y="10.5" font-family="Liberation Sans,sans-serif" font-weight="bold" font-size="8.7" fill="#00008c" stroke="#00008c" stroke-width=".3">IP</text><path d="M8.3 1 L10.8 3.4 L8.3 5.8 L5.8 3.4Z" fill="#18c830" stroke="#10a020" stroke-width=".4"/></svg>
<svg style="left:62.4px;top:60px" width="13" height="13" viewBox="0 0 13 13"><text x="0" y="10.5" font-family="Liberation Sans,sans-serif" font-weight="bold" font-size="8.7" fill="#00008c" stroke="#00008c" stroke-width=".3">IP</text><rect x="4.2" y="2.2" width="6.4" height="3.2" fill="#e8eaf4" stroke="#666" stroke-width=".6"/><path d="M4.2 2.5H10.6" stroke="#445" stroke-width=".9"/></svg>
<svg style="left:80.6px;top:60px" width="13" height="13" viewBox="0 0 13 13"><text x="0" y="10.5" font-family="Liberation Sans,sans-serif" font-weight="bold" font-size="8.7" fill="#00008c" stroke="#00008c" stroke-width=".3">IP</text><rect x="5.6" y="2" width="5" height="2" rx=".6" fill="#d01a2a"/></svg>
<svg style="left:98px;top:60px" width="12" height="12" viewBox="0 0 12 12"><path d="M1 2.6 Q1 1.6 2 1.6 H4.4 L5.4 2.8 H9.4 Q10.2 2.8 10.2 3.6 V10 H1Z" fill="#e8b84a" stroke="#c8922a" stroke-width=".6"/><path d="M6 1.2 H9.2 V3 H6Z" fill="#8cc0e8"/><path d="M0.8 10.4 L2 5 H11.6 L10.4 10.4Z" fill="#f8d888" stroke="#d8a840" stroke-width=".6"/></svg>
<svg style="left:117.2px;top:61px" width="9.8" height="9.8" viewBox="0 0 11 11"><rect x=".6" y=".6" width="9.6" height="9.8" rx="1" fill="#9a58cc" stroke="#7a3ab0" stroke-width=".8"/><rect x="1.8" y="1" width="7.2" height="5" fill="#fbf6fd"/><rect x="2.4" y="7" width="6" height="3.2" fill="#d8c0ea"/><rect x="3.2" y="7.6" width="1.6" height="2.4" fill="#5a2a8a"/></svg>
<svg style="left:135px;top:60px" width="11" height="12" viewBox="0 0 11 12"><rect x="0.4" y="0" width="10.2" height="12" fill="#d8d048"/><rect x="0" y="0" width="1.6" height="12" fill="#7a86c8"/><rect x="9.4" y="0" width="1.6" height="12" fill="#7a86c8"/><rect x="2.2" y="1" width="2.6" height="2.6" fill="#18b030"/><rect x="2.2" y="4.7" width="2.6" height="2.6" fill="#18b030"/><rect x="2.2" y="8.4" width="2.6" height="2.6" fill="#18b030"/><path d="M5.4 2.2 L6.6 3.4 L8.8 0.8 M5.4 5.9 L6.6 7.1 L8.8 4.5 M5.4 9.6 L6.6 10.8 L8.8 8.2" stroke="#e02020" stroke-width="1.1" fill="none"/></svg>
<svg style="left:153px;top:60px" width="11" height="12" viewBox="0 0 11 12"><rect x="0.4" y="0" width="10.2" height="12" fill="#d8d060"/><rect x="0" y="0" width="1.6" height="12" fill="#8a92c8"/><rect x="9.4" y="0" width="1.6" height="12" fill="#8a92c8"/><rect x="3" y="1.2" width="2.4" height="2.4" fill="#a8acb8" stroke="#787c90" stroke-width=".5"/><rect x="3" y="4.8" width="2.4" height="2.4" fill="#a8acb8" stroke="#787c90" stroke-width=".5"/><rect x="3" y="8.4" width="2.4" height="2.4" fill="#a8acb8" stroke="#787c90" stroke-width=".5"/></svg>
<svg style="left:173px;top:62.7px" width="6.8" height="6.8" viewBox="0 0 8 8"><rect x=".4" y=".4" width="7.2" height="7.2" rx="1.8" fill="#18b838" stroke="#0c8a24" stroke-width=".8"/><rect x="1.8" y="1.6" width="4" height="2" rx="1" fill="#58e070" opacity=".7"/></svg>
<svg style="left:191px;top:62.7px" width="6.8" height="6.8" viewBox="0 0 8 8"><rect x=".4" y=".4" width="7.2" height="7.2" rx="1.8" fill="#d81828" stroke="#a00c18" stroke-width=".8"/><rect x="1.8" y="1.6" width="4" height="2" rx="1" fill="#f06070" opacity=".7"/></svg>
<svg style="left:208.2px;top:61.6px" width="9.4" height="10.8" viewBox="0 0 11 12"><path d="M0.8 1 H10.2 L6.4 5.6 V10.8 L4.6 9.6 V5.6Z" fill="#a4a4a4" stroke="#2e2e2e" stroke-width="1.1"/><path d="M2.4 1.9 H8.6" stroke="#dedede" stroke-width=".8"/></svg>
<svg style="left:226px;top:61.6px" width="11.2" height="10.8" viewBox="0 0 13 12"><path d="M0.8 1 H10.2 L6.4 5.6 V10.8 L4.6 9.6 V5.6Z" fill="#a4a4a4" stroke="#2e2e2e" stroke-width="1.1"/><path d="M2.4 1.9 H8.6" stroke="#dedede" stroke-width=".8"/><path d="M6.6 10.6 L7.2 8.6 L10.6 5 L12 6.4 L8.6 10Z" fill="#f0b030" stroke="#b87a10" stroke-width=".5"/><path d="M10.6 5 L11.2 4.4 L12.6 5.8 L12 6.4Z" fill="#e04040"/></svg>
<svg style="left:243.5px;top:60.5px" width="10" height="12" viewBox="0 0 10 12"><path d="M3.2 0.6 H6.8 V5.4 H9.4 L5 10.8 L0.6 5.4 H3.2Z" fill="#2a8ae8" stroke="#1464c0" stroke-width=".8"/><path d="M4 1.4 H5 V6" stroke="#8cc8ff" stroke-width=".8" fill="none"/></svg>
<svg style="left:261.5px;top:60px" width="12" height="12" viewBox="0 0 12 12"><circle cx="4.6" cy="4.6" r="3.8" fill="#e4f0fa" stroke="#b8c4d0" stroke-width="1"/><path d="M7.4 7.4 L10.8 10.8" stroke="#555" stroke-width="2" stroke-linecap="round"/><circle cx="3.8" cy="3.8" r="1.6" fill="#fff" opacity=".8"/></svg>
<svg style="left:279.6px;top:60.8px" width="11.4" height="11" viewBox="0 0 12 12"><rect x=".5" y=".5" width="11" height="11" fill="#1c478f"/><rect x="1.8" y="1" width="9.2" height="9.4" fill="#fdfdfd"/><path d="M3.2 3H5.4 M3.2 5H5.4 M3.2 7H5.4 M7 3H9.6 M7 5H9.6 M7 7H9.6" stroke="#b8c8bc" stroke-width=".7"/><path d="M6.2 1 V10.4" stroke="#c8ccd8" stroke-width=".5"/></svg>
<svg style="left:298px;top:62px" width="11.5" height="8" viewBox="0 0 12 8.4"><rect x=".5" y=".5" width="11" height="7.4" fill="#dbeaf7" stroke="#6fa3d3" stroke-width=".9"/><path d="M.5 1 H7.5" stroke="#4a86c4" stroke-width="1.2"/><rect x="2" y="3.2" width="8" height="3.2" fill="#eaf3fb" stroke="#b4d0e8" stroke-width=".5"/></svg>
<div style="left:314px;top:58.5px;width:16px;height:15px;background:#cce4f7;border:1px solid #9acbf0;box-sizing:border-box"></div>
<svg style="left:316.4px;top:61.1px" width="11" height="11" viewBox="0 0 11 11"><circle cx="5.5" cy="5.5" r="4.7" fill="#fdfdfd" stroke="#3e3e3e" stroke-width="1.1"/><path d="M5.5 2.6 V5.8 H8.2" stroke="#2a5ab8" stroke-width=".9" fill="none"/></svg>

<!-- log toolbar icons -->
<div style="left:3.6px;top:434px;width:16px;height:15px;background:#cce4f7;border:1px solid #a8d2f2;box-sizing:border-box"></div>
<svg style="left:8px;top:436.8px" width="5.6" height="8.8" viewBox="0 0 7 11"><path d="M.8 .8 L6 5.5 L.8 10.2Z" fill="#5ab0f4" stroke="#2a86e0" stroke-width="1.3"/></svg>
<svg style="left:24.9px;top:437px" width="6.8" height="8.4" viewBox="0 0 8 9"><rect x=".5" y=".5" width="2.4" height="8" fill="#4aa4f0" stroke="#2a7ad8" stroke-width=".7"/><rect x="5" y=".5" width="2.4" height="8" fill="#4aa4f0" stroke="#2a7ad8" stroke-width=".7"/></svg>
<svg style="left:40.3px;top:436px" width="12.2" height="10" viewBox="0 0 13 11"><path d="M8.4 3 L10.6 .8 Q12 .4 12.4 1.8 L10.2 4.6Z" fill="#a06a30" stroke="#6a4018" stroke-width=".5"/><path d="M6.4 2.6 L10 6.4 L8.8 7.4 L5.2 3.6Z" fill="#d8d8d8" stroke="#555" stroke-width=".5"/><path d="M.8 5.2 Q3 3.4 5.4 3.4 L9 7.2 Q8.4 9.8 5.6 10.4 Q2.6 8.6 .8 5.2Z" fill="#d8a050" stroke="#8a5a20" stroke-width=".6"/><path d="M2.6 6 L5.4 9.2 M4.2 5 L7 8.2" stroke="#a87030" stroke-width=".5"/></svg>
<svg style="left:62.5px;top:437.5px" width="11" height="10" viewBox="0 0 11 10"><path d="M.6 1.6 Q.6 .8 1.4 .8 H3.6 L4.6 2 H9 Q9.8 2 9.8 2.8 V9 H.6Z" fill="#f0c868" stroke="#d8a840" stroke-width=".6"/><path d="M.6 9.2 L1.6 4.4 H10.6 L9.6 9.2Z" fill="#f8dc98" stroke="#e0b050" stroke-width=".6"/></svg>
<svg style="left:79.5px;top:436px" width="12" height="12" viewBox="0 0 12 12"><rect width="12" height="12" fill="#1c3a70"/><rect x="1.2" y="1.4" width="2" height="1.6" fill="#e8e8f8"/><rect x="4" y="1.4" width="2" height="1.6" fill="#e8a8b8"/><rect x="1.2" y="4.2" width="2" height="1.6" fill="#e8e8f8"/><rect x="7" y="8.6" width="1.6" height="1.6" fill="#c8d8f8"/><rect x="9.4" y="8.6" width="1.6" height="1.6" fill="#e8a8b8"/></svg>
<svg style="left:97px;top:436.5px" width="12" height="12" viewBox="0 0 12 12"><path d="M.8 .8 H5.6 L7 2.2 V8.4 H.8Z" fill="#e8f0fa" stroke="#9ab4d8" stroke-width=".8"/><path d="M4 3 H9 L10.8 4.8 V11.2 H4Z" fill="#cfe0f6" stroke="#7a9cd0" stroke-width=".8"/></svg>
<svg style="left:118.5px;top:436.5px" width="11" height="12" viewBox="0 0 11 12"><path d="M0.8 1 H10.2 L6.4 5.6 V10.8 L4.6 9.6 V5.6Z" fill="#a4a4a4" stroke="#2e2e2e" stroke-width="1.1"/><path d="M2.4 1.9 H8.6" stroke="#dedede" stroke-width=".8"/></svg>
<svg style="left:135.5px;top:436.5px" width="13" height="12" viewBox="0 0 13 12"><path d="M0.8 1 H10.2 L6.4 5.6 V10.8 L4.6 9.6 V5.6Z" fill="#a4a4a4" stroke="#2e2e2e" stroke-width="1.1"/><path d="M2.4 1.9 H8.6" stroke="#dedede" stroke-width=".8"/><path d="M6.6 10.6 L7.2 8.6 L10.6 5 L12 6.4 L8.6 10Z" fill="#f0b030" stroke="#b87a10" stroke-width=".5"/><path d="M10.6 5 L11.2 4.4 L12.6 5.8 L12 6.4Z" fill="#e04040"/></svg>
<!-- pin icon right -->
<div style="left:777.5px;top:433.5px;width:16px;height:15.5px;background:#cce4f7;border:1px solid #a8d2f2;box-sizing:border-box"></div>
<svg style="left:780px;top:436px" width="12" height="12" viewBox="0 0 12 12"><path d="M1 11 L4.6 7.4" stroke="#333" stroke-width="1.2" stroke-linecap="round"/><path d="M3.2 5.2 L6.8 8.8 L8 7.6 L7.6 6.4 L10.6 3.6 L11 2 L9.2 1 L8.4 1.4 L5.6 4.4 L4.4 4Z" fill="#e0283a" stroke="#a0141e" stroke-width=".6"/></svg>

<div class="wm"></div>
<svg style="left:551px;top:491.6px" width="38.5" height="41.3" viewBox="0 0 42 45">
<path d="M21 30 C21 36 20 40 17 43" fill="none" stroke="#0b3d12" stroke-width="2.8" stroke-linecap="round"/>
<g fill="#0b3d12" stroke="#0b3d12" stroke-width="3" stroke-linejoin="round"><path d="M0 0 C-3 -4 -10.5 -8 -10.5 -14.5 C-10.5 -19.5 -4.5 -21.5 0 -16.5 C4.5 -21.5 10.5 -19.5 10.5 -14.5 C10.5 -8 3 -4 0 0Z" transform="translate(20.5 21.5) rotate(45)"/><path d="M0 0 C-3 -4 -10.5 -8 -10.5 -14.5 C-10.5 -19.5 -4.5 -21.5 0 -16.5 C4.5 -21.5 10.5 -19.5 10.5 -14.5 C10.5 -8 3 -4 0 0Z" transform="translate(20.5 21.5) rotate(135)"/><path d="M0 0 C-3 -4 -10.5 -8 -10.5 -14.5 C-10.5 -19.5 -4.5 -21.5 0 -16.5 C4.5 -21.5 10.5 -19.5 10.5 -14.5 C10.5 -8 3 -4 0 0Z" transform="translate(20.5 21.5) rotate(225)"/><path d="M0 0 C-3 -4 -10.5 -8 -10.5 -14.5 C-10.5 -19.5 -4.5 -21.5 0 -16.5 C4.5 -21.5 10.5 -19.5 10.5 -14.5 C10.5 -8 3 -4 0 0Z" transform="translate(20.5 21.5) rotate(315)"/></g>
<g fill="#18b52a"><path d="M0 0 C-3 -4 -10.5 -8 -10.5 -14.5 C-10.5 -19.5 -4.5 -21.5 0 -16.5 C4.5 -21.5 10.5 -19.5 10.5 -14.5 C10.5 -8 3 -4 0 0Z" transform="translate(20.5 21.5) rotate(45)"/><path d="M0 0 C-3 -4 -10.5 -8 -10.5 -14.5 C-10.5 -19.5 -4.5 -21.5 0 -16.5 C4.5 -21.5 10.5 -19.5 10.5 -14.5 C10.5 -8 3 -4 0 0Z" transform="translate(20.5 21.5) rotate(135)"/><path d="M0 0 C-3 -4 -10.5 -8 -10.5 -14.5 C-10.5 -19.5 -4.5 -21.5 0 -16.5 C4.5 -21.5 10.5 -19.5 10.5 -14.5 C10.5 -8 3 -4 0 0Z" transform="translate(20.5 21.5) rotate(225)"/><path d="M0 0 C-3 -4 -10.5 -8 -10.5 -14.5 C-10.5 -19.5 -4.5 -21.5 0 -16.5 C4.5 -21.5 10.5 -19.5 10.5 -14.5 C10.5 -8 3 -4 0 0Z" transform="translate(20.5 21.5) rotate(315)"/></g>
<path d="M9 10 L32 33 M32 10 L9 33" stroke="#86e392" stroke-width="1.2" opacity=".9"/>
</svg>
<svg style="left:600px;top:490px" width="140" height="44" viewBox="0 0 140 44"><text transform="scale(.82 1)" x="8.5 36 75.6 97.6 111.6 140.9" y="38.5" font-family="Liberation Serif,DejaVu Serif,serif" font-weight="bold" font-size="36" fill="#1b2a8c" stroke="#1b2a8c" stroke-width=".9">TẢI VỀ</text>
<g fill="none" stroke="#1b2a8c" stroke-width="2.3" stroke-linecap="round"><path d="M8 1.2 C3.5 -.3 .6 3.4 2.4 7 C4.2 10 8.4 8.8 7.9 6" transform="translate(0.5 15.5)"/><path d="M8 1.2 C3.5 -.3 .6 3.4 2.4 7 C4.2 10 8.4 8.8 7.9 6" transform="translate(54.5 17.5)"/><path d="M8 1.2 C3.5 -.3 .6 3.4 2.4 7 C4.2 10 8.4 8.8 7.9 6" transform="translate(84.5 16)"/></g>
<g fill="#1b2a8c"><circle cx="7" cy="22" r="2"/><circle cx="61" cy="24" r="2"/><circle cx="91" cy="22.5" r="2"/></g></svg>
<svg style="left:746px;top:496px" width="46" height="38" viewBox="0 0 46 38"><path d="M4.5 19.8 L11.5 12.8 L19 21 L36.4 4.4 L42.6 10.4 L19 35Z" fill="#1cb32e" stroke="#0b2c10" stroke-width="2.2" stroke-linejoin="miter"/></svg>
<div class="bb"></div>
</body></html>
